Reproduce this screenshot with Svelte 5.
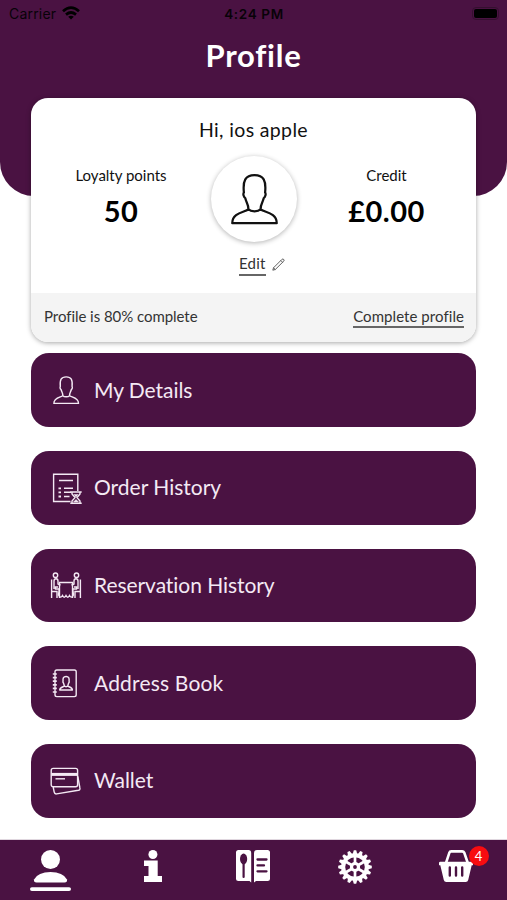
<script>
  const items = [
    { icon: 'person', label: 'My Details', track: -0.05 },
    { icon: 'orders', label: 'Order History', track: 0 },
    { icon: 'table', label: 'Reservation History', track: -0.06 },
    { icon: 'book', label: 'Address Book', track: 0.18 },
    { icon: 'wallet', label: 'Wallet', track: -0.05 }
  ];
  const teeth = Array.from({ length: 16 }, (_, i) => i * 22.5);
  const spokes = Array.from({ length: 6 }, (_, i) => i * 60);
</script>

{#snippet bust(weight)}
  <path
    d="M17 35.5C17.2 31 15 29.3 13.9 24.6C12.2 23.4 11.6 20.4 12.6 19.2C11.4 7.5 14 2.2 23 2.2S34.6 7.5 33.4 19.2C34.4 20.4 33.8 23.4 32.1 24.6C31 29.3 28.8 31 29 35.5M17 35.5C19.5 38.2 26.5 38.2 29 35.5C31.5 38.4 45 38.5 44.8 49.2H1.2C1 38.5 14.5 38.4 17 35.5Z"
    fill="none" stroke="currentColor" stroke-width={weight} stroke-linejoin="round" />
{/snippet}

<div class="screen">
  <header>
    <div class="status">
      <span class="carrier">Carrier
        <svg width="18" height="14" viewBox="0 0 18 14" fill="none" stroke="#000" stroke-width="2.7">
          <path d="M1 5.3Q9-2 17 5.3" /><path d="M4 8.6Q9 4.4 14 8.6" />
          <path d="M9 13.5L6.2 10.7Q9 8.6 11.8 10.7Z" fill="#000" stroke="none" />
        </svg>
      </span>
      <span class="clock">4:24 PM</span>
      <span class="battery"><i></i></span>
    </div>
    <h1>Profile</h1>
  </header>

  <main>
    <section class="card">
      <p class="hello">Hi, ios apple</p>
      <div class="summary">
        <div class="stat"><span class="name">Loyalty points</span><strong>50</strong></div>
        <div class="avatar">
          <svg width="47" height="52" viewBox="0 0 46 51">{@render bust(2.2)}</svg>
        </div>
        <div class="stat"><span class="name">Credit</span><strong>£0.00</strong></div>
      </div>
      <div class="edit">
        <a href="#edit">Edit</a>
        <svg width="13" height="13" viewBox="0 0 13 13" fill="none" stroke="#444" stroke-width="0.85">
          <path d="M.8 12.2L1.5 9.8L9.8 1.5Q10.8.6 11.7 1.4T11.6 3.3L3.3 11.5ZM1.5 9.8L3.3 11.5M8.8 2.5L10.6 4.3" />
        </svg>
      </div>
      <div class="progress">
        <span>Profile is 80% complete</span>
        <a href="#complete">Complete profile</a>
      </div>
    </section>

    {#each items as item}
      <button class="row">
        <svg class="glyph" width="32" height="32" viewBox="0 0 32 32" fill="none" stroke="currentColor" stroke-width="1.4">
          {#if item.icon === 'person'}
            <g transform="translate(3.2 1.6) scale(.565)">{@render bust(2.5)}</g>
          {:else if item.icon === 'orders'}
            <path d="M20.5 29.5H3.6V2.2H27.8V19M9 8.5H23M14 16.3H23M14 20.3H21M14 24.5H19.5" />
            <path d="M8.5 16.3H11M8.5 20.3H11M8.5 24.5H11" stroke-width="1.8" />
            <path d="M20.3 20H31.7M20.3 31.2H31.7M22 20V22L25 25.6L22 29V31M30 20V22L27 25.6L30 29V31" />
            <path d="M24 22.5H28L26 25ZM23.5 30L26 27.5L28.5 30Z" fill="currentColor" stroke-width=".5" />
          {:else if item.icon === 'table'}
            <circle cx="5.5" cy="5.2" r="2.2" /><circle cx="26.5" cy="5.2" r="2.2" />
            <path d="M1.6 9.5V28M1.6 21.5H7V28M4 19V11Q4 8.8 6 8.8T8 11V14L10.5 15.2M8 17H5.5V19H9.5V28M30.4 9.5V28M30.4 21.5H25V28M28 19V11Q28 8.8 26 8.8T24 11V14L21.5 15.2M24 17H26.5V19H22.5V28" />
            <path d="M9.5 12.5H22.5V17.5L23.5 25Q21.5 29 19.5 25.5Q17.8 29 16 25.5Q14.2 29 12.5 25.5Q10.5 29 8.5 25L9.5 17.5Z" />
          {:else if item.icon === 'book'}
            <rect x="5" y="3" width="21.2" height="26.6" rx="1.8" />
            <path d="M2.8 7H6.8M2.8 10.6H6.8M2.8 14.2H6.8M2.8 17.8H6.8M2.8 21.4H6.8M2.8 25H6.8" stroke-width="1.7" />
            <g transform="translate(9.4 8.8) scale(.29)">{@render bust(5)}</g>
          {:else}
            <rect x="1.2" y="3.4" width="26.4" height="18.4" rx="2" />
            <path d="M1.2 9.4H27.6" stroke-width="3" /><path d="M5.5 13.8H15" />
            <path d="M3.2 22L4.2 27.2Q4.6 29.2 6.6 28.9L28.4 25.3Q30.3 24.9 29.9 23L27.8 11.5" />
          {/if}
        </svg>
        <span style="letter-spacing: {item.track}px">{item.label}</span>
      </button>
    {/each}
  </main>

  <nav>
    <a href="#profile" aria-label="Profile">
      <svg width="41" height="41" viewBox="0 0 41 41" fill="#fff">
        <circle cx="20.5" cy="9.5" r="9.5" />
        <path d="M4 29.5Q8 22 20.5 22T37 29.5Q37.5 32.3 34.5 32.5H6.5Q3.5 32.3 4 29.5Z" />
        <rect y="37.2" width="41" height="3.8" rx="1.9" />
      </svg>
    </a>
    <a class="info" href="#info" aria-label="Information">
      <svg width="18" height="33" viewBox="0 0 18 33" fill="#fff">
        <circle cx="8.9" cy="4.5" r="4.5" />
        <path d="M0 10.5H13.7V26H18V32H0V26H4.5V16H0Z" />
      </svg>
    </a>
    <a href="#menu" aria-label="Menu">
      <svg width="34" height="33" viewBox="0 0 34 33" fill="#fff">
        <path d="M2.5 0H12.5Q15.2 0 15.2 3V32.5L13.5 31H2.5Q0 31 0 28.5V2.5Q0 0 2.5 0ZM18 3Q18 0 21 0H31.5Q34 0 34 2.5V28.5Q34 31 31.5 31H20L18 32.5Z" />
        <g fill="#4a1242"><ellipse cx="7.6" cy="9" rx="3.6" ry="5.4" /><rect x="6.5" y="13" width="2.2" height="15" rx="1.1" /></g>
        <path d="M21.5 9.5H30.5M21.5 15.4H28M21.5 21.3H30.5" stroke="#4a1242" stroke-width="2.3" stroke-linecap="round" />
      </svg>
    </a>
    <a href="#settings" aria-label="Settings">
      <svg width="34" height="34" viewBox="-17 -17 34 34" fill="none" stroke="#fff">
        {#each teeth as angle}
          <path d="M-2.4-12.5L-1.2-16.8H1.2L2.4-12.5Z" fill="#fff" stroke="none" transform="rotate({angle})" />
        {/each}
        <circle r="11.8" stroke-width="4" />
        <circle r="3.5" stroke-width="3.2" />
        {#each spokes as angle}
          <path d="M0-4V-11" stroke-width="2.7" transform="rotate({angle})" />
        {/each}
      </svg>
    </a>
    <a href="#basket" aria-label="Basket">
      <svg width="34" height="33" viewBox="0 0 34 33" fill="#fff">
        <path d="M7 13L10.4 2.6Q10.8 1.4 12.2 1.4H23.2Q24.6 1.4 25.2 2.6L28.8 13" fill="none" stroke="#fff" stroke-width="2.6" />
        <path d="M1.2 11.7H32.8Q34 11.7 34 13V15.3H32.7L29.2 30Q28.7 32 26.7 32H7.3Q5.3 32 4.8 30L1.3 15.3H0V13Q0 11.7 1.2 11.7Z" />
        <path d="M10.8 17.5V25.5M17 17.5V25.5M23.2 17.5V25.5" stroke="#4a1242" stroke-width="2.4" stroke-linecap="round" />
      </svg>
      <span class="badge">4</span>
    </a>
  </nav>
</div>

<style>
  :global(body) { margin: 0; background: #fff; }
  .screen {
    width: 507px; height: 900px; display: flex; flex-direction: column; overflow: hidden;
    font-family: Lato, "Open Sans", sans-serif; color: #111; background: #fff;
  }
  header { flex: none; height: 196px; background: #4a1242; border-radius: 0 0 34px 34px; }
  .status {
    height: 28px; display: grid; grid-template-columns: 1fr auto 1fr; align-items: center;
    padding: 0 8px 0 9px; font: 14px/28px Inter, sans-serif; color: #080208;
  }
  .carrier { display: flex; align-items: center; gap: 6px; letter-spacing: .2px; }
  .carrier svg { margin-top: -2px; }
  .clock { font-weight: 600; font-size: 13.5px; letter-spacing: .65px; }
  .battery { justify-self: end; margin-top: -2px; padding: 1px; border: 1px solid #35102f; border-radius: 4px; }
  .battery i { display: block; width: 23px; height: 9px; border-radius: 2px; background: #000; }
  h1 { margin: 7px 0 0; text-align: center; color: #fff; font-size: 31px; line-height: 40px; font-weight: 700; letter-spacing: .75px; }
  main { flex: none; margin-top: -98px; padding: 0 31px; display: flex; flex-direction: column; }
  .card {
    height: 244px; margin-bottom: 11.3px; display: flex; flex-direction: column; overflow: hidden;
    background: #fff; border-radius: 17px; box-shadow: 0 1px 5px rgba(0, 0, 0, .35);
  }
  .hello { margin: 19.5px 0 0; text-align: center; font-size: 19.5px; line-height: 24px; letter-spacing: .35px; }
  .summary { display: grid; grid-template-columns: 180px 86px 1fr; height: 86px; margin-top: 14px; }
  .stat { display: flex; flex-direction: column; align-items: center; padding-top: 9px; }
  .stat .name { font-size: 15px; line-height: 20px; }
  .stat strong { margin-top: 10px; font-size: 29px; line-height: 32px; font-weight: 700; letter-spacing: .5px; color: #000; }
  .avatar {
    display: flex; align-items: center; justify-content: center; border-radius: 50%;
    color: #111; box-shadow: 0 1px 5px rgba(0, 0, 0, .3);
  }
  .edit { display: flex; gap: 6px; padding: 11px 0 0 208px; font-size: 15px; }
  .edit svg { margin-top: 5px; }
  .edit a, .progress a { color: #333; text-decoration: none; border-bottom: 2px solid #666; line-height: 20px; }
  .edit a { height: 21px; letter-spacing: .2px; }
  .progress {
    height: 49px; margin-top: auto; padding: 0 12px 0 13px; display: flex; align-items: flex-start;
    justify-content: space-between; background: #f4f4f4; color: #333; font-size: 15px; line-height: 20px;
  }
  .progress span, .progress a { margin-top: 13px; }
  .progress span { letter-spacing: -.05px; }
  .progress a { letter-spacing: .06px; }
  .row {
    height: 73.7px; margin: 0 0 24px; padding: 0 0 0 19px; border: 0; border-radius: 18px;
    display: flex; align-items: center; gap: 12px; background: #4a1242; color: #f4e9f4;
    font: 21px/26px Lato, sans-serif; text-align: left; white-space: nowrap;
  }
  .row:last-child { margin-bottom: 0; }
  .row span { margin-top: -1px; }
  nav {
    height: 60px; flex: none; margin-top: auto; box-sizing: border-box; padding-top: 10px;
    display: grid; grid-template-columns: repeat(5, 1fr); background: #4a1242; box-shadow: 0 0 1px #4a1242;
  }
  nav a { display: flex; justify-content: center; align-items: flex-start; position: relative; }
  nav .info { padding-left: 2px; }
  .badge {
    position: absolute; left: 63px; top: -4px; width: 20px; height: 20px; border-radius: 50%;
    background: #f80c10; color: #fff; text-align: center; font-size: 13px; line-height: 20px;
  }
</style>
